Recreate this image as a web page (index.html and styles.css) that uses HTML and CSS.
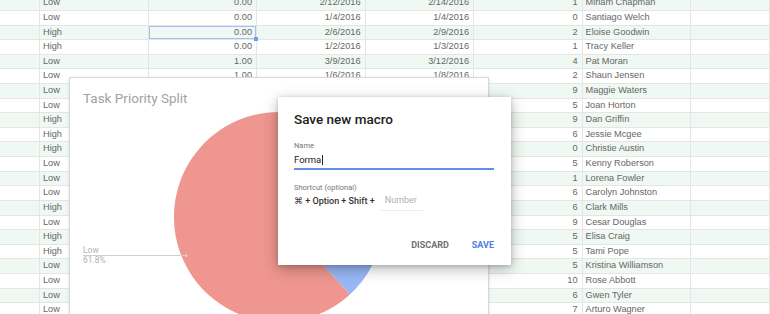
FILE: index.html
```html
<!DOCTYPE html>
<html>
<head>
<meta charset="utf-8">
<link rel="stylesheet" href="styles.css">
</head>
<body>
<div class="sheet">
  <div class="row"><div class="c"></div><div class="c">Low</div><div class="c r">0.00</div><div class="c r">2/12/2016</div><div class="c r">2/14/2016</div><div class="c r">1</div><div class="c">Miriam Chapman</div><div class="c"></div></div>
  <div class="row"><div class="c"></div><div class="c">Low</div><div class="c r">0.00</div><div class="c r">1/4/2016</div><div class="c r">1/4/2016</div><div class="c r">0</div><div class="c">Santiago Welch</div><div class="c"></div></div>
  <div class="row"><div class="c"></div><div class="c">High</div><div class="c r sel">0.00</div><div class="c r">2/6/2016</div><div class="c r">2/9/2016</div><div class="c r">2</div><div class="c">Eloise Goodwin</div><div class="c"></div></div>
  <div class="row"><div class="c"></div><div class="c">High</div><div class="c r">0.00</div><div class="c r">1/2/2016</div><div class="c r">1/3/2016</div><div class="c r">1</div><div class="c">Tracy Keller</div><div class="c"></div></div>
  <div class="row"><div class="c"></div><div class="c">Low</div><div class="c r">1.00</div><div class="c r">3/9/2016</div><div class="c r">3/12/2016</div><div class="c r">4</div><div class="c">Pat Moran</div><div class="c"></div></div>
  <div class="row"><div class="c"></div><div class="c">Low</div><div class="c r">1.00</div><div class="c r">1/6/2016</div><div class="c r">1/8/2016</div><div class="c r">2</div><div class="c">Shaun Jensen</div><div class="c"></div></div>
  <div class="row"><div class="c"></div><div class="c">Low</div><div class="c r">0.50</div><div class="c r">2/1/2016</div><div class="c r">2/10/2016</div><div class="c r">9</div><div class="c">Maggie Waters</div><div class="c"></div></div>
  <div class="row"><div class="c"></div><div class="c">Low</div><div class="c r">1.00</div><div class="c r">1/9/2016</div><div class="c r">1/12/2016</div><div class="c r">5</div><div class="c">Joan Horton</div><div class="c"></div></div>
  <div class="row"><div class="c"></div><div class="c">High</div><div class="c r">0.25</div><div class="c r">2/3/2016</div><div class="c r">2/6/2016</div><div class="c r">9</div><div class="c">Dan Griffin</div><div class="c"></div></div>
  <div class="row"><div class="c"></div><div class="c">High</div><div class="c r">0.00</div><div class="c r">3/1/2016</div><div class="c r">3/4/2016</div><div class="c r">6</div><div class="c">Jessie Mcgee</div><div class="c"></div></div>
  <div class="row"><div class="c"></div><div class="c">High</div><div class="c r">1.00</div><div class="c r">1/14/2016</div><div class="c r">1/15/2016</div><div class="c r">0</div><div class="c">Christie Austin</div><div class="c"></div></div>
  <div class="row"><div class="c"></div><div class="c">Low</div><div class="c r">0.75</div><div class="c r">2/18/2016</div><div class="c r">2/20/2016</div><div class="c r">5</div><div class="c">Kenny Roberson</div><div class="c"></div></div>
  <div class="row"><div class="c"></div><div class="c">Low</div><div class="c r">0.00</div><div class="c r">1/20/2016</div><div class="c r">1/22/2016</div><div class="c r">1</div><div class="c">Lorena Fowler</div><div class="c"></div></div>
  <div class="row"><div class="c"></div><div class="c">Low</div><div class="c r">1.00</div><div class="c r">3/3/2016</div><div class="c r">3/7/2016</div><div class="c r">6</div><div class="c">Carolyn Johnston</div><div class="c"></div></div>
  <div class="row"><div class="c"></div><div class="c">High</div><div class="c r">0.50</div><div class="c r">2/22/2016</div><div class="c r">2/24/2016</div><div class="c r">6</div><div class="c">Clark Mills</div><div class="c"></div></div>
  <div class="row"><div class="c"></div><div class="c">Low</div><div class="c r">0.00</div><div class="c r">1/25/2016</div><div class="c r">1/28/2016</div><div class="c r">9</div><div class="c">Cesar Douglas</div><div class="c"></div></div>
  <div class="row"><div class="c"></div><div class="c">High</div><div class="c r">1.00</div><div class="c r">3/14/2016</div><div class="c r">3/16/2016</div><div class="c r">5</div><div class="c">Elisa Craig</div><div class="c"></div></div>
  <div class="row"><div class="c"></div><div class="c">High</div><div class="c r">0.00</div><div class="c r">2/8/2016</div><div class="c r">2/11/2016</div><div class="c r">5</div><div class="c">Tami Pope</div><div class="c"></div></div>
  <div class="row"><div class="c"></div><div class="c">Low</div><div class="c r">0.25</div><div class="c r">1/11/2016</div><div class="c r">1/13/2016</div><div class="c r">5</div><div class="c">Kristina Williamson</div><div class="c"></div></div>
  <div class="row"><div class="c"></div><div class="c">Low</div><div class="c r">1.00</div><div class="c r">3/20/2016</div><div class="c r">3/23/2016</div><div class="c r">10</div><div class="c">Rose Abbott</div><div class="c"></div></div>
  <div class="row"><div class="c"></div><div class="c">Low</div><div class="c r">0.00</div><div class="c r">2/15/2016</div><div class="c r">2/17/2016</div><div class="c r">6</div><div class="c">Gwen Tyler</div><div class="c"></div></div>
  <div class="row"><div class="c"></div><div class="c">Low</div><div class="c r">0.50</div><div class="c r">1/18/2016</div><div class="c r">1/19/2016</div><div class="c r">7</div><div class="c">Arturo Wagner</div><div class="c"></div></div>
</div>

<div class="chart">
  <div class="chart-title">Task Priority Split</div>
  <svg class="pie" width="420" height="240" viewBox="0 0 420 240">
    <path d="M210,140 L210,35 A105,105 0 0 1 280.9,217.4 Z" fill="#97b7f6"/>
    <path d="M210,140 L280.9,217.4 A105,105 0 1 1 210,35 Z" fill="#ee968f"/>
    <line x1="14" y1="178.5" x2="117" y2="178.5" stroke="#cfcfcf" stroke-width="1"/>
    <circle cx="117" cy="178.5" r="1.3" fill="#d8d8d8"/>
    <text x="14" y="175.5" class="lbl">Low</text>
    <text x="14" y="186" class="lbl">61.8%</text>
  </svg>
</div>

<div class="dialog">
  <div class="d-title">Save new macro</div>
  <div class="field">
    <div class="f-label">Name</div>
    <div class="f-input">Forma<span class="caret"></span></div>
  </div>
  <div class="shortcut">
    <div class="f-label">Shortcut (optional)</div>
    <div class="keys"><span>⌘ + Option + Shift +</span><span class="num">Number</span></div>
  </div>
  <div class="actions">
    <span class="btn">DISCARD</span>
    <span class="btn primary">SAVE</span>
  </div>
</div>
</body>
</html>
```

FILE: styles.css
```css
html, body {
  margin: 0;
  padding: 0;
  width: 770px;
  height: 314px;
  overflow: hidden;
  background: #ffffff;
}
body {
  position: relative;
  font-family: "Liberation Sans", Arial, sans-serif;
}
.sheet {
  margin-top: -3.62px;
  display: flex;
  flex-direction: column;
}
.row {
  display: grid;
  grid-template-columns: 40px repeat(6, 108.5px) 1fr;
  height: 14.62px;
  box-sizing: border-box;
  border-bottom: 1px solid #e4e6e5;
}
.row:nth-child(odd) {
  background: #eff8f2;
}
.c {
  box-sizing: border-box;
  border-right: 1px solid #e4e6e5;
  font-size: 9.2px;
  line-height: 13.6px;
  color: #666666;
  padding: 0 3px;
  white-space: nowrap;
  overflow: hidden;
}
.c.r {
  text-align: right;
  padding-right: 4px;
}
.sel {
  position: relative;
  overflow: visible;
  box-shadow: inset 0 0 0 1px #a4bff0;
}
.sel::after {
  content: "";
  position: absolute;
  right: -2px;
  bottom: -2px;
  width: 4px;
  height: 4px;
  background: #6f9eec;
}
.chart {
  position: absolute;
  left: 69px;
  top: 77px;
  width: 420px;
  height: 260px;
  box-sizing: border-box;
  background: #fff;
  border: 1px solid #d8d8d8;
  box-shadow: 0 1px 3px rgba(0,0,0,0.12);
}
.chart-title {
  font-family: Roboto, "Liberation Sans", sans-serif;
  font-size: 13.5px;
  color: #a2a2a2;
  padding: 12px 0 0 13px;
  line-height: 16px;
}
.pie {
  position: absolute;
  left: -1px;
  top: -1px;
}
.lbl {
  font-family: Roboto, "Liberation Sans", sans-serif;
  font-size: 8.5px;
  fill: #b4b4b4;
}
.dialog {
  position: absolute;
  left: 278px;
  top: 97px;
  width: 233px;
  height: 168px;
  box-sizing: border-box;
  background: #fff;
  padding: 13px 17px 0 16px;
  box-shadow: 0 4px 14px rgba(0,0,0,0.28), 0 1px 4px rgba(0,0,0,0.18);
  font-family: Roboto, "Liberation Sans", sans-serif;
  display: flex;
  flex-direction: column;
}
.d-title {
  font-size: 13.5px;
  font-weight: 500;
  color: #212121;
  line-height: 18px;
}
.field {
  margin-top: 13px;
}
.f-label {
  font-size: 7.5px;
  color: #757575;
  line-height: 10px;
}
.f-input {
  font-size: 9.5px;
  color: #212121;
  line-height: 13px;
  margin-top: 2px;
  padding-bottom: 2px;
  border-bottom: 2px solid #5f8fe6;
  display: flex;
  align-items: center;
}
.caret {
  display: inline-block;
  width: 1px;
  height: 10px;
  background: #222;
  margin-left: 1px;
}
.shortcut {
  margin-top: 13px;
}
.keys {
  display: flex;
  align-items: center;
  gap: 6px;
  font-size: 9px;
  font-weight: 500;
  color: #333;
  line-height: 13px;
  margin-top: -2px;
}
.num {
  font-weight: 400;
  color: #b0b0b0;
  padding: 0 4px 3px 4px;
  width: 34px;
  border-bottom: 1px solid #ececec;
  margin-top: 3px;
}
.actions {
  margin-top: auto;
  margin-bottom: 14px;
  display: flex;
  justify-content: flex-end;
  gap: 23px;
}
.btn {
  font-size: 9px;
  font-weight: 700;
  color: #6f6f6f;
  line-height: 12px;
}
.btn.primary {
  color: #4a7fe1;
}
```
